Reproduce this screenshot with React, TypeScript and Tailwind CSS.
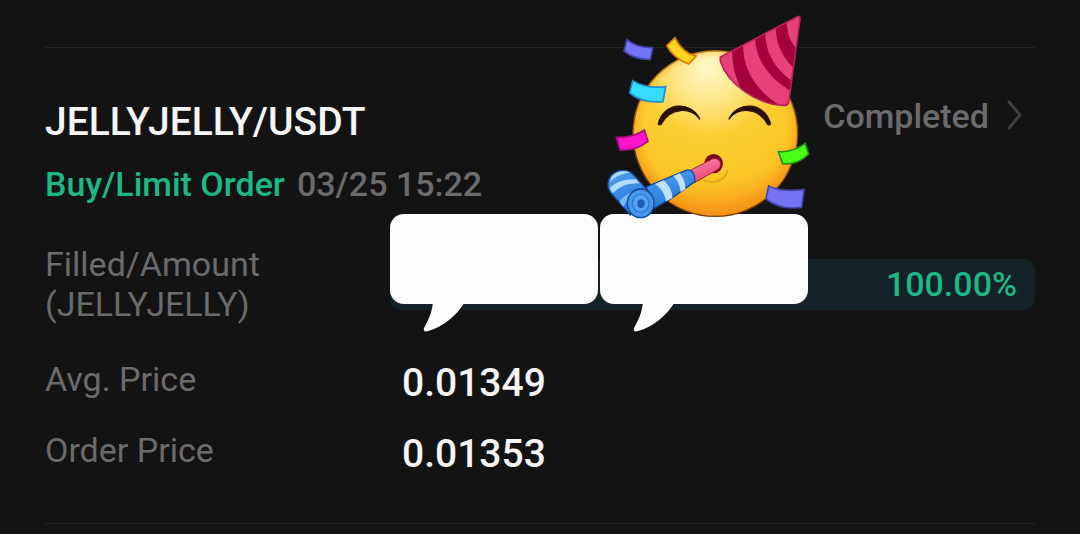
import React from "react";

interface PriceRow {
  id: string;
  label: string;
  value: string;
}

const prices: PriceRow[] = [
  { id: "avg", label: "Avg. Price", value: "0.01349" },
  { id: "order", label: "Order Price", value: "0.01353" },
];

function Bubble() {
  return (
    <svg viewBox="0 0 208 118" className="w-[208px] h-[118px] shrink-0" fill="#fdfdfd" aria-hidden="true">
      <rect width="208" height="90" rx="14" />
      <path d="M43 88C42 99 38 107 34 114C33 117 35 118 38 117C53 113 66 102 75 88Z" />
    </svg>
  );
}

function PartyFace() {
  return (
    <svg viewBox="0 0 660 690" className="w-[220px] h-[230px]" role="img" aria-label="Party face">
      <defs>
        <radialGradient id="skin" gradientUnits="userSpaceOnUse" cx="325" cy="205" r="450">
          <stop offset="0" stopColor="#fff8c8" />
          <stop offset="0.22" stopColor="#fee78a" />
          <stop offset="0.45" stopColor="#fccf33" />
          <stop offset="0.76" stopColor="#fbc525" />
          <stop offset="1" stopColor="#f79418" />
        </radialGradient>
        <radialGradient id="rim" gradientUnits="userSpaceOnUse" cx="346" cy="385" r="265">
          <stop offset="0.8" stopColor="#f79a18" stopOpacity="0" />
          <stop offset="1" stopColor="#f08c12" stopOpacity="0.75" />
        </radialGradient>
        <linearGradient id="edge" x1="0" y1="0" x2="0" y2="1">
          <stop offset="0" stopColor="#c98408" />
          <stop offset="0.6" stopColor="#6e3d08" />
          <stop offset="1" stopColor="#7a3c05" />
        </linearGradient>
        <linearGradient id="horn" x1="0" y1="0" x2="0.4" y2="1">
          <stop offset="0" stopColor="#4fa2f2" />
          <stop offset="1" stopColor="#2878d8" />
        </linearGradient>
        <linearGradient id="tip" x1="0" y1="0" x2="0.4" y2="1">
          <stop offset="0" stopColor="#ff8fb0" />
          <stop offset="1" stopColor="#e83e74" />
        </linearGradient>
        <clipPath id="hat">
          <path d="M361 171L592 50Q600 47 600 56L566 307Q563 318 551 316C470 314 382 250 361 184Z" />
        </clipPath>
      </defs>

      {/* Face */}
      <ellipse cx="346" cy="401" rx="247" ry="248" fill="url(#skin)" />
      <ellipse cx="346" cy="401" rx="247" ry="248" fill="url(#rim)" stroke="url(#edge)" strokeWidth="4" />
      <path d="M175 371C190 307 273 300 299 357C272 321 211 320 184 372Q178 378 175 371Z" fill="#2b1202" stroke="#2b1202" strokeWidth="4" strokeLinejoin="round" />
      <path d="M511 371C496 307 413 300 387 357C414 321 475 320 502 372Q508 378 511 371Z" fill="#2b1202" stroke="#2b1202" strokeWidth="4" strokeLinejoin="round" />
      <path d="M310 540C343 555 376 540 383 510" fill="none" stroke="#d9a51c" strokeWidth="5" />
      <ellipse cx="341" cy="491" rx="28" ry="29" fill="#760d18" />

      {/* Hat */}
      <path d="M361 171L592 50Q600 47 600 56L566 307Q563 318 551 316C470 314 382 250 361 184Z" fill="#e84078" />
      <g clipPath="url(#hat)" fill="#a3003b">
        <path d="M396 145L429 130C428 205 463 270 545 320L400 320L424 268C404 230 396 190 396 145Z" />
        <path d="M465 108L496 92C496 160 524 205 580 245L572 273C506 232 466 180 465 108Z" />
        <path d="M527 76L560 60C560 98 570 128 596 152L586 208C545 172 527 130 527 76Z" />
      </g>
      <path d="M361 171L592 50Q600 47 600 56L566 307Q563 318 551 316C470 314 382 250 361 184Z" fill="none" stroke="#b52359" strokeWidth="5" strokeLinejoin="round" />

      {/* Party horn */}
      <path d="M273 510L337 477C357 470 371 493 354 508L284 548Z" fill="url(#tip)" stroke="#a91d48" strokeWidth="3" />
      <path d="M140 560L258 511C276 505 284 520 285 545L208 599L150 632Z" fill="url(#horn)" stroke="#12469a" strokeWidth="4" />
      <path d="M165 552L190 541C208 556 217 574 217 594L198 604C195 583 184 564 165 552Z" fill="#bfe0ff" />
      <path d="M220 528L239 520C250 533 257 550 256 567L242 576C240 557 233 541 220 528Z" fill="#bfe0ff" />
      <path d="M29 574C12 539 40 505 80 512Q93 515 102 526L151 580L91 645Z" fill="url(#horn)" stroke="#12469a" strokeWidth="4" />
      <path d="M34 531C48 515 64 512 80 514L89 518C65 520 48 528 30 545Z" fill="#b5dafd" />
      <path d="M29 564C50 544 76 536 108 538L119 550C85 548 60 558 38 580Z" fill="#b5dafd" />
      <path d="M58 605C75 582 100 571 132 570L140 578C108 579 84 592 70 620Z" fill="#79baf8" />
      <ellipse cx="122" cy="610" rx="40" ry="43" fill="#4798ec" stroke="#12469a" strokeWidth="4" />
      <ellipse cx="122" cy="610" rx="25" ry="27" fill="#55a2ef" stroke="#2f7bd6" strokeWidth="4" />
      <ellipse cx="123" cy="611" rx="11" ry="13" fill="#1d5fb8" />

      {/* Confetti */}
      <g strokeWidth="5" strokeLinejoin="miter">
        <path d="M81 119Q110 144 158 143L151 178Q102 179 72 153Z" fill="#7474fa" stroke="#4545ad" />
        <path d="M98 242Q138 267 197 260L189 305Q126 310 89 279Z" fill="#35dcfb" stroke="#208dd1" />
        <path d="M225 113L200 137Q222 177 266 192L288 168Q247 159 225 113Z" fill="#ffd51f" stroke="#d77805" />
        <path d="M49 412Q97 415 133 390L144 424Q105 454 60 450Z" fill="#ff13cb" stroke="#a30d83" />
        <path d="M535 455Q577 458 616 430L626 462Q594 496 548 491Z" fill="#48ff17" stroke="#238d12" />
        <path d="M506 558Q550 578 612 568L605 622Q540 631 498 597Z" fill="#7474f5" stroke="#4444a7" />
      </g>
    </svg>
  );
}

export default function App() {
  return (
    <main className="min-h-screen bg-[#131313] px-[45px] pt-[47px] font-['Roboto',sans-serif] text-[34px] leading-10 text-[#6b6b6b]">
      <article className="border-y border-[#232323] pt-12 pb-[45px]">
        <header className="flex items-start justify-between">
          <h1 className="pt-[2px] text-[39px] leading-[48px] font-medium text-[#f5f5f5]">JELLYJELLY/USDT</h1>
          <button type="button" className="flex items-center gap-4 pr-3 font-medium">
            Completed
            <svg viewBox="0 0 18 32" className="w-[18px] h-8" fill="none" stroke="#3d3e46" strokeWidth="3" strokeLinecap="round" strokeLinejoin="round" aria-hidden="true">
              <path d="M4 2L15 15L4 28" />
            </svg>
          </button>
        </header>

        <p className="mt-[18px] flex gap-3 font-medium">
          <span className="text-[#1cb885]">Buy/Limit Order</span>
          <time dateTime="03-25T15:22">03/25 15:22</time>
        </p>

        <dl className="mt-10 flex flex-col gap-[23px]">
          <div className="mb-3 grid grid-cols-[345px_1fr] items-center">
            <dt>
              Filled/Amount
              <br />
              (JELLYJELLY)
            </dt>
            <dd className="relative flex h-[51px] items-center justify-end rounded-xl bg-[#142126] pr-[18px] font-medium text-[#1cb885]">
              100.00%
              {/* Stickers laid over the filled amount */}
              <div className="absolute left-0 -top-[45px] flex gap-[2px]">
                <Bubble />
                <Bubble />
              </div>
              <div className="absolute left-[210px] -top-[259px]">
                <PartyFace />
              </div>
            </dd>
          </div>

          {prices.map((row) => (
            <div key={row.id} className="grid grid-cols-[345px_1fr]">
              <dt>{row.label}</dt>
              <dd className="pl-3 text-[39px] leading-[48px] font-medium text-[#f5f5f5]">{row.value}</dd>
            </div>
          ))}
        </dl>
      </article>
    </main>
  );
}
